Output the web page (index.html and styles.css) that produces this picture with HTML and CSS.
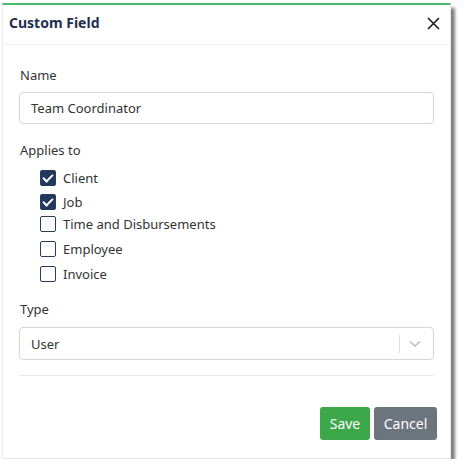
FILE: index.html
```html
<!DOCTYPE html>
<html lang="en">
<head>
  <meta charset="UTF-8">
  <title>Custom Field</title>
  <link rel="stylesheet" href="styles.css">
</head>
<body>

  <div class="dialog">
    <div class="dialog-header">
      <div class="dialog-title">Custom Field</div>
      <svg class="close" width="13" height="13" viewBox="0 0 13 13">
        <path d="M1 1 L12 12 M12 1 L1 12" stroke="#222" stroke-width="1.7" fill="none"/>
      </svg>
    </div>

    <div class="dialog-body">
      <label class="field-label">Name</label>
      <div class="input">Team Coordinator</div>

      <label class="field-label applies">Applies to</label>
      <div class="checks">
        <div class="check checked"><span class="box"></span>Client</div>
        <div class="check checked"><span class="box"></span>Job</div>
        <div class="check"><span class="box"></span>Time and Disbursements</div>
        <div class="check"><span class="box"></span>Employee</div>
        <div class="check"><span class="box"></span>Invoice</div>
      </div>

      <label class="field-label">Type</label>
      <div class="select">
        <span>User</span>
        <span class="select-sep"></span>
        <svg class="chevron" width="12" height="8" viewBox="0 0 12 8">
          <path d="M1 1.5 L6 6 L11 1.5" stroke="#bbb" stroke-width="1.5" fill="none"/>
        </svg>
      </div>

      <div class="rule"></div>
    </div>

    <div class="dialog-footer">
      <button class="btn btn-save">Save</button>
      <button class="btn btn-cancel">Cancel</button>
    </div>
  </div>

</body>
</html>
```

FILE: styles.css
```css
body {
  margin: 0;
  background: #fff;
  font-family: "Noto Sans", "Open Sans", sans-serif;
  font-size: 13px;
  color: #333;
}

.dialog {
  margin: 3px 0 0 2px;
  width: 449px;
  height: 456px;
  box-sizing: border-box;
  background: #fff;
  border-top: 2px solid #4cbb72;
  border-left: 1px solid #ececec;
  border-right: 1px solid #e6e6e6;
  border-bottom: 1px solid #e6e6e6;
  box-shadow: 4px 5px 3px rgba(0,0,0,0.5);
  display: flex;
  flex-direction: column;
}

.dialog-header {
  display: flex;
  justify-content: space-between;
  align-items: flex-start;
  height: 40px;
  box-sizing: border-box;
  padding: 8px 10px 0 6px;
  border-bottom: 1px solid #f0f0f0;
}
.dialog-title {
  font-size: 14px;
  line-height: 20px;
  font-weight: bold;
  color: #1f2f4f;
}
.close { margin-top: 4px; }

.dialog-body {
  padding: 20px 16px 0 17px;
}

.field-label {
  display: block;
  line-height: 20px;
  margin-bottom: 8px;
}
.field-label:first-child { margin-bottom: 7px; }
.field-label.applies { margin-bottom: 7px; }

.input, .select {
  height: 32px;
  box-sizing: border-box;
  border: 1px solid #d6d6d6;
  border-radius: 4px;
  padding: 0 11px;
  display: flex;
  align-items: center;
  margin: 0 0 15px -1px;
}
.input { margin-bottom: 16px; }

.checks {
  padding-left: 20px;
  margin-bottom: 14px;
}
.check {
  display: flex;
  align-items: center;
  height: 22px;
  gap: 7px;
}
.check:nth-child(2) { margin-top: 2px; }
.check:nth-child(4),
.check:nth-child(5) { margin-top: 3px; }
.box {
  width: 14px;
  height: 14px;
  border: 1.5px solid #2a3d5f;
  border-radius: 2px;
  background: #fff;
  position: relative;
}
.check.checked .box { background: #22375c; }
.check.checked .box::after {
  content: "";
  position: absolute;
  left: 4px;
  top: 1px;
  width: 4px;
  height: 8px;
  border: solid #fff;
  border-width: 0 2px 2px 0;
  transform: rotate(45deg);
}

.select { height: 33px; padding-right: 12px; }
.select span:first-child { flex: 1; }
.select-sep {
  width: 1px;
  height: 18px;
  background: #ddd;
  margin-right: 9px;
}

.rule {
  height: 1px;
  background: #e8e8e8;
  margin-left: -1px;
}

.dialog-footer {
  display: flex;
  justify-content: flex-end;
  gap: 4px;
  padding: 31px 13px 0 0;
}
.btn {
  height: 33px;
  border: none;
  border-radius: 3px;
  color: #fff;
  font-family: inherit;
  font-size: 14px;
  padding: 0;
}
.btn-save { background: #3da84a; width: 50px; }
.btn-cancel { background: #6c757d; width: 63px; }
```
